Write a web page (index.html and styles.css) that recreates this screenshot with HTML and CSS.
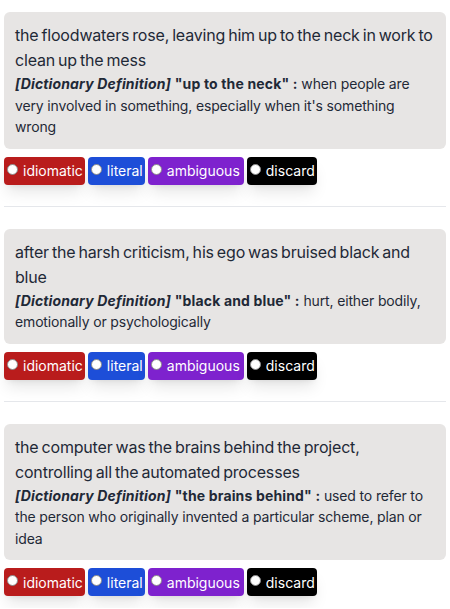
FILE: index.html
```html
<!DOCTYPE html>
<html lang="en">
<head>
    <meta charset="UTF-8">
    <meta name="viewport" content="width=device-width, initial-scale=1.0">
    <title>Idiom labelling</title>
    <link rel="stylesheet" href="styles.css">
</head>
<body>
    <div class="list">
        <div class="item">
            <div class="card">
                <p class="sentence">the floodwaters rose, leaving him up to the neck in work to clean up the mess</p>
                <p class="definition"><em>[Dictionary Definition]</em> <b>"up to the neck" :</b> when people are very involved in something, especially when it's something wrong</p>
            </div>
            <div class="choices">
                <label class="choice idiomatic"><span class="dot"></span>idiomatic</label>
                <label class="choice literal"><span class="dot"></span>literal</label>
                <label class="choice ambiguous"><span class="dot"></span>ambiguous</label>
                <label class="choice discard"><span class="dot"></span>discard</label>
            </div>
        </div>
        <hr>
        <div class="item">
            <div class="card">
                <p class="sentence">after the harsh criticism, his ego was bruised black and blue</p>
                <p class="definition"><em>[Dictionary Definition]</em> <b>"black and blue" :</b> hurt, either bodily, emotionally or psychologically</p>
            </div>
            <div class="choices">
                <label class="choice idiomatic"><span class="dot"></span>idiomatic</label>
                <label class="choice literal"><span class="dot"></span>literal</label>
                <label class="choice ambiguous"><span class="dot"></span>ambiguous</label>
                <label class="choice discard"><span class="dot"></span>discard</label>
            </div>
        </div>
        <hr>
        <div class="item">
            <div class="card">
                <p class="sentence">the computer was the brains behind the project, controlling all the automated processes</p>
                <p class="definition"><em>[Dictionary Definition]</em> <b>"the brains behind" :</b> used to refer to the person who originally invented a particular scheme, plan or idea</p>
            </div>
            <div class="choices">
                <label class="choice idiomatic"><span class="dot"></span>idiomatic</label>
                <label class="choice literal"><span class="dot"></span>literal</label>
                <label class="choice ambiguous"><span class="dot"></span>ambiguous</label>
                <label class="choice discard"><span class="dot"></span>discard</label>
            </div>
        </div>
    </div>
</body>
</html>
```

FILE: styles.css
```css
body{
    margin: 0;
    font-family: Inter, "Noto Sans", sans-serif;
    color: #1f2937;
    background: #fff;
}

.list{
    padding: 12px 4px;
}

.card{
    background-color: #e7e5e4;
    border-radius: 6px;
    padding: 11px;
}

.card p{
    margin: 0;
}

.sentence{
    font-size: 16px;
    line-height: 25px;
    letter-spacing: -0.18px;
    word-spacing: -1.3px;
}

.definition{
    font-size: 14px;
    line-height: 21.5px;
    letter-spacing: -0.15px;
}

.definition em,
.definition b{
    font-weight: 700;
    letter-spacing: 0.15px;
}

.choices{
    display: flex;
    gap: 3px;
    margin-top: 8px;
}

.choice{
    display: flex;
    align-items: center;
    gap: 5px;
    height: 28px;
    padding: 0 2px 0 3px;
    border-radius: 4px;
    color: white;
    font-size: 14px;
    box-shadow: 0 10px 15px -3px rgba(0,0,0,.1), 0 4px 6px -4px rgba(0,0,0,.1);
    cursor: pointer;
}

.ambiguous{
    padding-right: 4px;
}

.dot{
    width: 9px;
    height: 9px;
    border-radius: 50%;
    background: white;
    border: 1px solid #8a8a8a;
    margin-top: -3px;
}

.idiomatic{ background-color: #b91c1c; }
.literal{ background-color: #1d4ed8; }
.ambiguous{ background-color: #7e22ce; }
.discard{ background-color: #000; }

hr{
    border: 0;
    border-top: 1px solid #e5e7eb;
    margin: 21px 0 22px;
}
```
